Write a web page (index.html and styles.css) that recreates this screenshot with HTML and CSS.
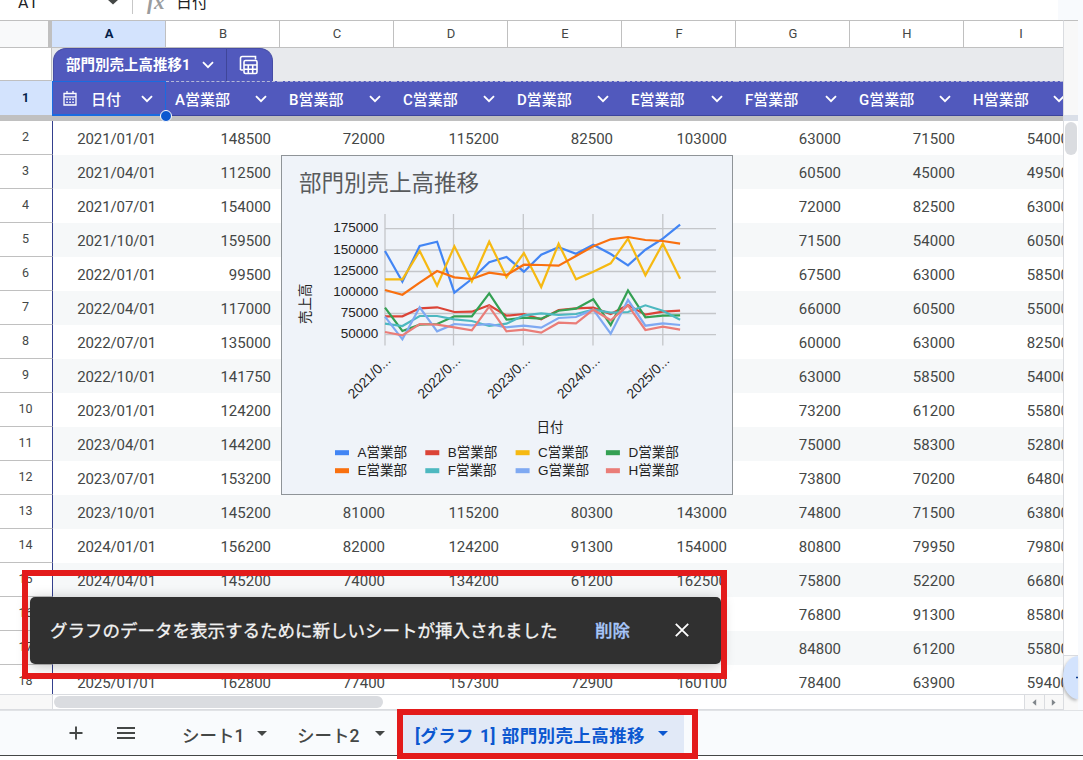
FILE: index.html
```
<!DOCTYPE html>
<html lang="ja">
<head>
  <meta charset="UTF-8" />
  <title>部門別売上高推移</title>
  <link rel="stylesheet" href="styles.css">
</head>
<body>
  <div class="app">
    <div class="formula-bar">
      <span class="name-box">A1</span>
      <svg class="name-arrow" width="12" height="6" viewBox="0 0 12 6"><path d="M0 0h12L6 5.5z" fill="#444746"/></svg>
      <span class="bar-line"></span>
      <span class="fx">fx</span>
      <span class="formula">日付</span>
      <span class="side-top"></span>
    </div>

    <div class="main">
      <div class="sheet">
        <div class="col-heads" id="colHeads"><div class="corner"></div></div>
        <div class="table-row">
          <div class="row-blank"></div>
          <div class="table-tab">
            <span class="table-name">部門別売上高推移1</span>
            <svg width="12" height="8" viewBox="0 0 12 8"><path d="M1 1.2l5 5 5-5" fill="none" stroke="#fff" stroke-width="1.8"/></svg>
            <span class="table-calc">
              <svg width="20" height="20" viewBox="0 0 20 20" fill="none" stroke="#fff" stroke-width="1.6">
                <path d="M1.500 15V3.200Q1.500 1.500 3.200 1.500H16.500V4.500M1.500 15H4"/>
                <rect x="5" y="5.500" width="13" height="13" rx="1.500"/>
                <path d="M5 10h13M5 14.300h13M9.300 10v8.500M13.700 10v8.500"/>
              </svg>
            </span>
          </div>
        </div>
        <div class="head-row" id="headRow"><div class="row-num active">1</div></div>
        <div class="freeze-bar"></div>
        <div class="rows" id="rows"></div>
        <div class="h-scroll">
          <div class="h-corner"></div>
          <div class="h-track"><div class="h-thumb"></div></div>
          <div class="h-btn"><svg width="5" height="7" viewBox="0 0 6 8"><path d="M5 0v8L0.500 4z" fill="#80868b"/></svg></div>
          <div class="h-btn"><svg width="5" height="7" viewBox="0 0 6 8"><path d="M1 0v8l4.500-4z" fill="#80868b"/></svg></div>
        </div>
      </div>
      <div class="v-scroll">
        <div class="v-head"></div>
        <div class="v-freeze"></div>
        <div class="v-track"><div class="v-thumb"></div></div>
        <div class="v-foot"><div class="explore"><svg width="9" height="9" viewBox="0 0 9 9"><path d="M0 4.500h9" stroke="#0b3a8c" stroke-width="1.500"/></svg></div></div>
      </div>
      <div class="side"></div>
    </div>

    <div class="tabs">
      <svg class="add" width="14" height="14" viewBox="0 0 14 14"><path d="M7 0.500v13M0.500 7h13" stroke="#444746" stroke-width="1.900"/></svg>
      <svg class="menu" width="18" height="12" viewBox="0 0 18 12"><path d="M0 1h18M0 6h18M0 11h18" stroke="#444746" stroke-width="1.900"/></svg>
      <div class="tab tab-one"><span>シート1</span><i class="caret"></i></div>
      <div class="tab tab-two"><span>シート2</span><i class="caret"></i></div>
      <div class="tab active"><span>[グラフ 1] 部門別売上高推移</span><i class="caret"></i></div>
    </div>

    <div class="handle"></div>
    <div class="selection"></div>

    <div class="chart">
      <svg width="450" height="338" viewBox="282 156 450 338">
        <text class="chart-title" x="299" y="191">部門別売上高推移</text>
        <g class="grid">
          <path d="M385 228.700H716M385 250H716M385 271.500H716M385 292H716M385 313.500H716M385 334.700H716"/>
          <path d="M385 214V345.500M453.500 214V345.500M523.300 214V345.500M593 214V345.500M662.800 214V345.500"/>
        </g>
        <g class="label" text-anchor="end">
          <text x="378.300" y="232.200">175000</text>
          <text x="378.300" y="254">150000</text>
          <text x="378.300" y="275.300">125000</text>
          <text x="378.300" y="296.300">100000</text>
          <text x="378.300" y="317.400">75000</text>
          <text x="378.300" y="338.400">50000</text>
        </g>
        <g id="lines" class="lines"></g>
        <text class="label" transform="translate(310 324) rotate(-90)">売上高</text>
        <g id="dates" class="label dates" text-anchor="end"></g>
        <text class="label" x="536.500" y="431.500">日付</text>
        <g id="legend" class="label"></g>
      </svg>
    </div>

    <div class="toast">
      <span class="toast-text">グラフのデータを表示するために新しいシートが挿入されました</span>
      <span class="toast-action">削除</span>
      <svg width="14" height="14" viewBox="0 0 14 14"><path d="M0.800 0.800l12.400 12.400M13.200 0.800L0.800 13.200" stroke="#fff" stroke-width="1.800"/></svg>
    </div>
    <div class="mark mark-toast"></div>
    <div class="mark mark-tab"></div>
  </div>

  <script>
    const cols = ['A', 'B', 'C', 'D', 'E', 'F', 'G', 'H', 'I'];
    const chevron = '<svg width="12" height="8" viewBox="0 0 12 8"><path d="M1 1.200l5 5 5-5" fill="none" stroke="#fff" stroke-width="1.900"/></svg>';
    const calendar = '<svg class="cal" width="14" height="15" viewBox="0 0 14 15"><path d="M1 2.500h12v11.500H1zM1 5.800h12M4 0v2.500M10 0v2.500" fill="none" stroke="#fff" stroke-width="1.300"/><path d="M3.300 8.300h7.500M3.300 11.200h7.500" stroke="#fff" stroke-width="1.400" stroke-dasharray="1.500"/></svg>';

    // cells behind the chart are left empty
    const data = [
      ['2021/01/01', 148500, 72000, 115200, 82500, 103000, 63000, 71500, 54000],
      ['2021/04/01', 112500, '', '', '', '', 60500, 45000, 49500],
      ['2021/07/01', 154000, '', '', '', '', 72000, 82500, 63000],
      ['2021/10/01', 159500, '', '', '', '', 71500, 54000, 60500],
      ['2022/01/01', 99500, '', '', '', '', 67500, 63000, 58500],
      ['2022/04/01', 117000, '', '', '', '', 66000, 60500, 55000],
      ['2022/07/01', 135000, '', '', '', '', 60000, 63000, 82500],
      ['2022/10/01', 141750, '', '', '', '', 63000, 58500, 54000],
      ['2023/01/01', 124200, '', '', '', '', 73200, 61200, 55800],
      ['2023/04/01', 144200, '', '', '', '', 75000, 58300, 52800],
      ['2023/07/01', 153200, '', '', '', '', 73800, 70200, 64800],
      ['2023/10/01', 145200, 81000, 115200, 80300, 143000, 74800, 71500, 63800],
      ['2024/01/01', 156200, 82000, 124200, 91300, 154000, 80800, 79950, 79800],
      ['2024/04/01', 145200, 74000, 134200, 61200, 162500, 75800, 52200, 66800],
      ['', '', '', '', '', '', 76800, 91300, 85800],
      ['', '', '', '', '', '', 84800, 61200, 55800],
      ['2025/01/01', 162800, 77400, 157300, 72900, 160100, 78400, 63900, 59400]
    ];

    document.getElementById('colHeads').innerHTML += cols.map((c, i) =>
      `<div class="col-head${i ? '' : ' active'}">${c}</div>`).join('');

    document.getElementById('headRow').innerHTML += cols.map((c, i) => i
      ? `<div class="head-cell"><span>${cols[i - 1]}営業部</span>${chevron}</div>`
      : `<div class="head-cell first">${calendar}<span>日付</span>${chevron}</div>`).join('');

    document.getElementById('rows').innerHTML = data.map((row, i) =>
      `<div class="row"><div class="row-num">${i + 2}</div>` +
      row.map(v => `<div class="cell">${v}</div>`).join('') + '</div>').join('');

    // chart series, y positions for each quarter
    const series = [
      ['A', '#4285f4', [251, 281.7, 246, 241.7, 292.7, 279, 262.3, 257, 271.7, 254.7, 247.3, 253.7, 244.7, 254, 265.3, 249.7, 238.7, 224.7]],
      ['B', '#db4437', [316.3, 316.3, 308.3, 307.3, 312, 311.7, 305.3, 315.7, 314, 319.3, 310, 308.3, 307.7, 314, 305, 314.7, 311.7, 310.7]],
      ['C', '#f6b912', [279.3, 279.3, 251, 285.7, 246.3, 281.3, 241.7, 277.3, 253, 287, 243.7, 279.3, 271.7, 263.3, 238.7, 275.3, 243.7, 278.7]],
      ['D', '#34a053', [307.7, 331, 324.7, 324, 316.3, 316.3, 293.3, 319.7, 317.7, 318.7, 310.7, 308.7, 299.3, 325, 290.5, 317.3, 315.7, 315.3]],
      ['E', '#f9700f', [290, 294.7, 282.7, 271, 277.3, 279, 272.7, 275, 264.7, 265, 265.7, 256, 246.3, 239.3, 237, 240, 241, 243.7]],
      ['F', '#4db8c0', [323.7, 326, 316, 316, 319.3, 321, 326, 323.7, 315.3, 313.3, 315, 314, 309.7, 312.7, 312, 305.3, 310.7, 319.7]],
      ['G', '#7fa9f2', [316.7, 339.3, 307.3, 331.3, 324, 325.3, 324, 327.3, 325.7, 327.7, 318, 317, 309.7, 333.7, 300, 325.7, 323.3, 325]],
      ['H', '#ea7d78', [332, 335.3, 324, 324.7, 327.3, 330.3, 306.7, 331.3, 329.7, 332.7, 322.7, 323.3, 309.7, 320.3, 305.3, 330, 326.7, 329.7]]
    ];
    document.getElementById('lines').innerHTML = series.map(s =>
      `<polyline stroke="${s[1]}" points="${s[2].map((y, i) => (385 + i * 17.36).toFixed(1) + ',' + y).join(' ')}"/>`).join('');

    document.getElementById('legend').innerHTML = series.map((s, i) => {
      const x = 335 + (i % 4) * 90.3;
      const y = i < 4 ? 452.5 : 470.5;
      return `<rect x="${x}" y="${y - 2.3}" width="14" height="5" fill="${s[1]}"/><text x="${x + 22.5}" y="${y + 4.3}">${s[0]}営業部</text>`;
    }).join('');

    document.getElementById('dates').innerHTML = [2021, 2022, 2023, 2024, 2025].map((y, i) =>
      `<text transform="translate(${391.5 + i * 69.7} 361.500) rotate(-45)">${y}/0...</text>`).join('');
  </script>
</body>
</html>
```
FILE: styles.css
```
* {
  box-sizing: border-box;
}
body {
  margin: 0;
  overflow: hidden;
  font-family: Roboto, "Noto Sans CJK JP", sans-serif;
  color: #444746;
  background: #fff;
}
svg {
  display: block;
  flex: none;
}
.app {
  position: relative;
  width: 1083px;
  height: 760px;
  overflow: hidden;
  display: flex;
  flex-direction: column;
}

/* formula bar */
.formula-bar {
  height: 20px;
  flex: none;
  display: flex;
  align-items: flex-start;
  overflow: hidden;
  font-size: 16px;
  line-height: 20px;
}
.name-box {
  width: 107px;
  padding-left: 18px;
  margin-top: -7px;
  color: #202124;
}
.name-arrow {
  margin-top: -1px;
}
.bar-line {
  width: 1px;
  height: 14px;
  margin-left: 13px;
  background: #c7c7c7;
}
.fx {
  width: 43px;
  padding-left: 14px;
  margin-top: -8px;
  font: italic bold 21px/20px "Liberation Serif", serif;
  color: #9a9c9e;
}
.formula {
  margin-top: -7px;
  color: #202124;
}
.side-top {
  width: 25px;
  height: 20px;
  margin-left: auto;
  background: #f8fafd;
}

/* sheet */
.main {
  height: 690px;
  flex: none;
  display: flex;
}
.sheet {
  width: 1063px;
  overflow: hidden;
  display: flex;
  flex-direction: column;
}
.col-heads {
  display: flex;
  width: 1080px;
  height: 28px;
  flex: none;
  border-top: 1px solid #c0c0c0;
  border-bottom: 1px solid #c0c0c0;
}
.corner {
  width: 52px;
  flex: none;
  background: #f8f9fa;
  border-right: 4px solid #c0c0c0;
}
.col-head {
  width: 114px;
  flex: none;
  padding-left: 1px;
  border-right: 1px solid #c0c0c0;
  text-align: center;
  font-size: 13px;
  line-height: 26px;
}
.col-head.active {
  background: #d3e3fd;
  color: #041e49;
  font-weight: bold;
}
.table-row {
  display: flex;
  height: 33px;
  flex: none;
  background: #e8eaed;
}
.row-blank {
  width: 52px;
  background: #fff;
  border-right: 1px solid #c0c0c0;
  border-bottom: 1px solid #c0c0c0;
}
.table-tab {
  display: flex;
  align-items: center;
  width: 220px;
  margin-left: 1px;
  padding-left: 12px;
  border-radius: 13px 13px 0 0;
  background: #5159bd;
  border: 1px solid #464da6;
  border-bottom: 0;
  color: #fff;
}
.table-name {
  width: 136px;
  padding-bottom: 3px;
  font-size: 14.5px;
  font-weight: bold;
  white-space: nowrap;
}
.table-calc {
  display: flex;
  align-items: center;
  height: 100%;
  margin-left: 12px;
  padding-left: 12px;
  border-left: 1px solid #3f4699;
}
.head-row {
  display: flex;
  height: 35px;
  flex: none;
}
.row-num {
  width: 53px;
  margin-right: -1px;
  padding-right: 1px;
  flex: none;
  border-right: 1px solid #34408e;
  border-bottom: 1px solid #c0c0c0;
  background: #fff;
  text-align: center;
  font-size: 12.5px;
  line-height: 32px;
  position: relative;
}
.row-num.active {
  line-height: 33px;
  background: #d3e3fd;
  color: #041e49;
  font-weight: bold;
}
.head-cell {
  width: 114px;
  flex: none;
  display: flex;
  align-items: center;
  padding-left: 9px;
  background: #5159bd;
  border-top: 1px dashed #b5b8d8;
  border-bottom: 1px solid #3c449c;
  color: #fff;
  font-size: 15px;
  font-weight: 500;
}
.head-cell span {
  width: 80px;
}
.head-cell.first {
  padding-left: 11px;
}
.head-cell.first span {
  width: 50px;
  margin-left: 14px;
}
.freeze-bar {
  height: 5px;
  flex: none;
  background: #c0c0c0;
}
.rows {
  height: 573px;
  flex: none;
  overflow: hidden;
}
.row {
  display: flex;
  height: 34px;
}
.row:nth-child(even) .cell {
  background: #f6f8f9;
}
.cell {
  width: 114px;
  flex: none;
  padding-right: 9px;
  text-align: right;
  font-size: 15px;
  line-height: 37px;
  height: 34px;
}
.cell:nth-child(2) {
  padding-right: 10px;
  letter-spacing: -0.1px;
}

/* scrollbars */
.h-scroll {
  display: flex;
  height: 16px;
  flex: none;
  border-top: 1px solid #dadce0;
  border-bottom: 1px solid #dadce0;
}
.h-corner {
  width: 53px;
  background: #f8f8f8;
  border-right: 1px solid #dadce0;
}
.h-track {
  flex: 1;
  padding: 1px;
}
.h-thumb {
  width: 329px;
  height: 12px;
  border-radius: 6px;
  background: #dadce0;
}
.h-btn {
  width: 19.5px;
  display: flex;
  align-items: center;
  justify-content: center;
  background: #f8f8f8;
  border-left: 1px solid #dadce0;
}
.v-scroll {
  width: 15px;
  flex: none;
  display: flex;
  flex-direction: column;
  border-left: 1px solid #dadce0;
  border-top: 1px solid #c0c0c0;
}
.v-head {
  height: 94px;
  background: #f8f8f8;
}
.v-freeze {
  height: 6px;
  background: #dadfe8;
}
.v-track {
  height: 534px;
  padding: 1px;
}
.v-thumb {
  width: 12px;
  height: 33px;
  border-radius: 6px;
  background: #dadce0;
}
.v-foot {
  flex: 1;
  border-top: 1px solid #dadce0;
  background: #f8f8f8;
}
.explore {
  position: absolute;
  left: 1063px;
  top: 656px;
  width: 15px;
  height: 43px;
  border-radius: 15px 0 0 15px / 21px 0 0 21px;
  background: #d3e3fd;
  box-shadow: -1px 2px 3px rgba(60, 64, 67, 0.3);
  overflow: hidden;
  display: flex;
  align-items: center;
  padding-left: 13px;
}
.side {
  flex: 1;
  background: #f8fafd;
}

/* sheet tabs */
.tabs {
  display: flex;
  align-items: center;
  height: 46px;
  flex: none;
  background: #f9fbfd;
  border-top: 1px solid #e1e3e6;
  border-bottom: 1px solid #444746;
}
.add {
  margin-left: 69px;
}
.menu {
  margin-left: 34px;
}
.tab {
  display: flex;
  align-items: center;
  height: 100%;
  font-size: 17.5px;
  font-weight: 500;
  white-space: nowrap;
}
.tab span {
  padding-top: 2px;
}
.tab-one {
  width: 115px;
  margin-left: 47px;
}
.tab-two {
  width: 105px;
}
.tab .caret {
  margin-left: 13px;
}
.tab-two .caret {
  margin-left: 16px;
}
.caret {
  border: 5px solid transparent;
  border-top-color: currentColor;
  border-bottom: 0;
}
.tab.active {
  width: 282px;
  padding-left: 13px;
  background: #e1e9f7;
  color: #0b57d0;
  font-weight: bold;
  letter-spacing: 0.4px;
  word-spacing: 1.3px;
}

/* overlays */
.selection {
  position: absolute;
  left: 52px;
  top: 81px;
  width: 114px;
  height: 35px;
  border: 1px solid #1a6be0;
  border-bottom-width: 2px;
}
.handle {
  position: absolute;
  left: 160px;
  top: 110px;
  width: 12px;
  height: 12px;
  border: 1px solid #fff;
  border-radius: 50%;
  background: #0b57d0;
  z-index: 1;
}
.chart {
  position: absolute;
  left: 281px;
  top: 155px;
  width: 452px;
  height: 340px;
  border: 1px solid #8f9498;
  background: #eff3f9;
}
.chart-title {
  font-size: 22.5px;
  fill: #585a5c;
}
.label {
  font-family: "Liberation Sans", "Noto Sans CJK JP", sans-serif;
  font-size: 13.5px;
  fill: #222;
}
.dates {
  font-size: 13.8px;
}
.grid {
  stroke: #c4c6ca;
  stroke-width: 1.3;
}
.lines {
  fill: none;
  stroke-width: 2.2;
}
.toast {
  position: absolute;
  left: 30px;
  top: 597px;
  width: 691px;
  height: 67px;
  display: flex;
  align-items: center;
  padding: 0 0 2px 20px;
  border-radius: 5px;
  background: #303030;
  box-shadow: 0 2px 14px rgba(0, 0, 0, 0.25);
  color: #f2f2f2;
  font-size: 17.5px;
  white-space: nowrap;
}
.toast-text {
  width: 545px;
}
.toast-action {
  width: 80px;
  color: #a8c7fa;
  font-weight: 500;
}
.toast-text,
.toast-action {
  padding-bottom: 1px;
  -webkit-text-stroke: 0.3px currentColor;
}
.mark {
  position: absolute;
  border: 6px solid #e31b1b;
}
.mark-toast {
  left: 22px;
  top: 570px;
  width: 705px;
  height: 109px;
}
.mark-tab {
  left: 397px;
  top: 709px;
  width: 301px;
  height: 50px;
}
```
